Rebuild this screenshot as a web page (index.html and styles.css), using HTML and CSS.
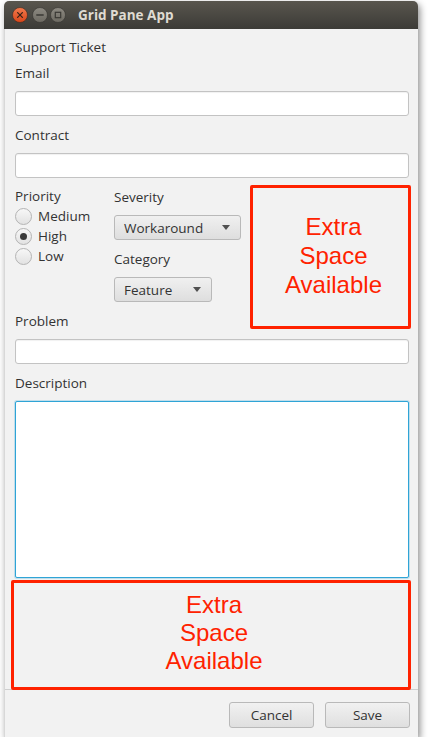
FILE: index.html
```html
<!DOCTYPE html>
<html>
<head>
<meta charset="utf-8">
<link rel="stylesheet" href="styles.css">
</head>
<body>
<div class="window">
  <div class="titlebar">
    <div class="controls">
      <svg class="ctl" width="16" height="16" viewBox="0 0 16 16">
        <defs>
          <linearGradient id="gc" x1="0" y1="0" x2="0" y2="1"><stop offset="0" stop-color="#f37a4c"/><stop offset="1" stop-color="#d9461a"/></linearGradient>
        </defs>
        <circle cx="8" cy="8" r="7.5" fill="url(#gc)" stroke="#3a2a22" stroke-width="0.6"/>
        <path d="M5.6 5.6 L10.4 10.4 M10.4 5.6 L5.6 10.4" stroke="#3b2318" stroke-width="1.3" stroke-linecap="round"/>
      </svg>
      <svg class="ctl ctl-min" width="16" height="16" viewBox="0 0 16 16">
        <defs>
          <linearGradient id="gm" x1="0" y1="0" x2="0" y2="1"><stop offset="0" stop-color="#8d8a82"/><stop offset="1" stop-color="#6c6961"/></linearGradient>
        </defs>
        <circle cx="8" cy="8" r="7.5" fill="url(#gm)" stroke="#34332f" stroke-width="0.6"/>
        <path d="M4.8 8 H11.2" stroke="#3a3935" stroke-width="1.4" stroke-linecap="round"/>
      </svg>
      <svg class="ctl" width="16" height="16" viewBox="0 0 16 16">
        <circle cx="8" cy="8" r="7.5" fill="url(#gm)" stroke="#34332f" stroke-width="0.6"/>
        <rect x="5.3" y="5.3" width="5.4" height="5.4" fill="none" stroke="#3a3935" stroke-width="1.2"/>
      </svg>
    </div>
    <span class="title">Grid Pane App</span>
  </div>
  <div class="body">
    <div class="form">
      <div class="lbl lbl-first">Support Ticket</div>
      <div class="lbl">Email</div>
      <div class="field"></div>
      <div class="lbl">Contract</div>
      <div class="field"></div>
      <div class="mid">
        <div class="col-priority">
          <div class="lbl lbl-priority">Priority</div>
          <div class="radio"><span class="dot"></span>Medium</div>
          <div class="radio"><span class="dot checked"></span>High</div>
          <div class="radio"><span class="dot"></span>Low</div>
        </div>
        <div class="col-combos">
          <div class="lbl lbl-tight">Severity</div>
          <div class="combo combo-wide"><span>Workaround</span><span class="arrow"></span></div>
          <div class="lbl">Category</div>
          <div class="combo combo-narrow"><span>Feature</span><span class="arrow"></span></div>
        </div>
      </div>
      <div class="lbl">Problem</div>
      <div class="field"></div>
      <div class="lbl">Description</div>
      <div class="area"></div>
    </div>
    <div class="buttonbar">
      <div class="btn">Cancel</div>
      <div class="btn">Save</div>
    </div>
  </div>
  <div class="note note-top">Extra<br>Space<br>Available</div>
  <div class="note note-bottom">Extra<br>Space<br>Available</div>
</div>
</body>
</html>
```
FILE: styles.css
```css
html, body {
  margin: 0;
  padding: 0;
  background: #ffffff;
}
body {
  font-family: "Open Sans", "DejaVu Sans", sans-serif;
  font-size: 13.5px;
  color: #333333;
}
.window {
  position: relative;
  margin: 1px 0 0 4px;
  width: 414px;
  height: 736px;
  display: flex;
  flex-direction: column;
  box-shadow: 2px 3px 7px rgba(0,0,0,0.45);
  border-radius: 5px 5px 0 0;
  background: #f2f2f2;
}
.titlebar {
  height: 28px;
  flex: none;
  display: flex;
  align-items: center;
  background: linear-gradient(#59564e, #3c3b37);
  border-radius: 5px 5px 0 0;
}
.controls {
  display: flex;
  gap: 2px;
  margin-left: 8px;
  align-items: center;
}
.ctl {
  display: block;
}
.ctl-min {
  margin-left: 2px;
}
.title {
  margin-left: 12px;
  font-weight: bold;
  font-size: 13.5px;
  color: #dfdbd2;
}
.body {
  flex: 1;
  display: flex;
  flex-direction: column;
  border-left: 1px solid #d8d8d8;
}
.form {
  flex: 1;
  padding: 0 9px 0 10px;
  display: flex;
  flex-direction: column;
}
.lbl {
  height: 20px;
  line-height: 20px;
  margin-top: 9px;
}
.lbl-first {
  margin-top: 8px;
}
.lbl-first + .lbl {
  margin-top: 6px;
}
.field {
  height: 23px;
  margin-top: 8px;
  background: #ffffff;
  border: 1px solid #c3c3c3;
  border-radius: 3px;
  box-shadow: inset 0 1px 1px rgba(0,0,0,0.06);
}
.mid {
  display: flex;
  margin-top: 9px;
}
.col-priority {
  width: 99px;
  display: flex;
  flex-direction: column;
}
.col-priority .lbl-priority {
  margin-top: 0;
  height: 19px;
  line-height: 19px;
}
.radio {
  height: 20px;
  display: flex;
  align-items: center;
  gap: 6px;
}
.dot {
  border-radius: 50%;
  border: 1px solid #b4b4b4;
  background: linear-gradient(#f7f7f7, #e2e2e2);
  box-sizing: border-box;
  width: 17px;
  height: 17px;
  display: flex;
  align-items: center;
  justify-content: center;
}
.dot.checked::after {
  content: "";
  width: 7px;
  height: 7px;
  border-radius: 50%;
  background: #3a3a3a;
}
.col-combos {
  display: flex;
  flex-direction: column;
  align-items: flex-start;
}
.col-combos .lbl-tight {
  margin-top: 0;
}
.combo {
  margin-top: 8px;
  height: 23px;
  border: 1px solid #b9b9b9;
  border-radius: 3px;
  background: linear-gradient(#f0f0f0, #dedede);
  display: flex;
  align-items: center;
  justify-content: space-between;
  padding: 0 10px 0 9px;
  box-sizing: content-box;
}
.combo-wide {
  width: 106px;
}
.combo-narrow {
  width: 77px;
}
.arrow {
  width: 0;
  height: 0;
  border-left: 4px solid transparent;
  border-right: 4px solid transparent;
  border-top: 5px solid #505050;
}
.area {
  height: 175px;
  margin-top: 8px;
  background: #ffffff;
  border: 1px solid #2fa4d6;
  border-radius: 2px;
  box-shadow: 0 0 0 1px rgba(47,164,214,0.25);
}
.buttonbar {
  flex: none;
  height: 48px;
  border-top: 1px solid #cfcfcf;
  display: flex;
  justify-content: flex-end;
  align-items: flex-start;
  gap: 11px;
  padding: 12px 8px 0 0;
  box-sizing: border-box;
}
.btn {
  width: 83px;
  height: 24px;
  border: 1px solid #b9b9b9;
  border-radius: 3px;
  background: linear-gradient(#f1f1f1, #dfdfdf);
  display: flex;
  align-items: center;
  justify-content: center;
}
.note {
  position: absolute;
  box-sizing: border-box;
  border: 3px solid #ff2200;
  border-radius: 2px;
  color: #ff2200;
  font-family: "Liberation Sans", Arial, sans-serif;
  font-size: 24px;
  line-height: 29px;
  text-align: center;
  display: flex;
  align-items: center;
  justify-content: center;
  padding: 0 0 4px 6px;
}
.note-top {
  left: 246px;
  top: 184px;
  width: 161px;
  height: 144px;
}
.note-bottom {
  left: 7px;
  top: 579px;
  width: 400px;
  height: 110px;
  line-height: 28px;
}
```
